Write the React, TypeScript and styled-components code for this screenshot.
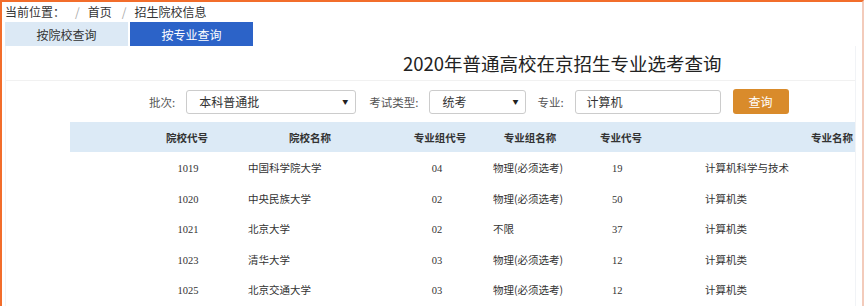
import React from "react";
import styled, { createGlobalStyle } from "styled-components";

const GlobalStyle = createGlobalStyle`
  html, body {
    margin: 0;
    padding: 0;
    background: #fff;
  }
  body {
    font-family: "Noto Sans CJK SC", "Noto Sans", sans-serif;
    color: #333;
  }
`;

const Frame = styled.div`
  box-sizing: border-box;
  width: 864px;
  height: 306px;
  overflow: hidden;
  border-top: 2px solid #f26d2b;
  border-left: 2px solid #f26d2b;
  border-right: 2px solid #f3cbbb;
  padding-left: 3px;
  padding-right: 6px;
`;

const Breadcrumb = styled.div`
  display: flex;
  align-items: center;
  height: 20px;
  font-size: 12px;
  line-height: 20px;
  color: #333;
`;

const Sep = styled.span`
  color: #aaa;
  margin: 0 8px 0 10px;
`;

const Tabs = styled.div`
  display: flex;
  gap: 2px;
  height: 24px;
`;

const Tab = styled.div<{ $active?: boolean }>`
  width: 123px;
  display: flex;
  align-items: center;
  justify-content: center;
  font-size: 12px;
  background: ${({ $active }) => ($active ? "#2c63c8" : "#dce9f5")};
  color: ${({ $active }) => ($active ? "#fff" : "#333")};
`;

const Panel = styled.div`
  border-left: 1px solid #f1f3f6;
  border-right: 1px solid #f1f3f6;
  height: 260px;
`;

const TitleRow = styled.div`
  height: 34px;
  border-bottom: 1px solid #f1f1f1;
  display: flex;
  align-items: center;
  padding-left: 397px;
`;

const Title = styled.h1`
  margin: 0;
  font-size: 18.5px;
  font-weight: normal;
  color: #222;
`;

const FilterRow = styled.div`
  display: flex;
  align-items: center;
  height: 41px;
  padding-left: 143px;
`;

const Label = styled.span<{ $gap?: number }>`
  font-size: 11.5px;
  color: #555;
  margin-left: ${({ $gap }) => $gap ?? 0}px;
  margin-right: 11px;
`;

const SelectBox = styled.div<{ $width: number }>`
  box-sizing: border-box;
  width: ${({ $width }) => $width}px;
  height: 24px;
  border: 1px solid #ccc;
  border-radius: 3px;
  display: flex;
  align-items: center;
  justify-content: space-between;
  padding: 0 7px 0 12px;
  font-size: 12px;
  color: #333;
`;

const Arrow = styled.span`
  font-size: 6px;
  color: #222;
`;

const InputBox = styled.div`
  box-sizing: border-box;
  width: 146px;
  height: 24px;
  border: 1px solid #ccc;
  border-radius: 3px;
  display: flex;
  align-items: center;
  padding-left: 11px;
  font-size: 12px;
  color: #333;
`;

const QueryButton = styled.button`
  margin-left: 12px;
  width: 56px;
  height: 25px;
  border: none;
  border-radius: 3px;
  background: #d98b2b;
  color: #fff;
  font-family: inherit;
  font-size: 12px;
  padding: 0;
`;

const Table = styled.div`
  margin-left: 64px;
`;

const Row = styled.div<{ $cols: string; $head?: boolean }>`
  display: grid;
  grid-template-columns: ${({ $cols }) => $cols};
  align-items: center;
  height: ${({ $head }) => ($head ? "30px" : "30.5px")};
  background: ${({ $head }) => ($head ? "#dceaf6" : "transparent")};
  font-size: 10.5px;
  font-weight: ${({ $head }) => ($head ? "bold" : "normal")};
  color: #333;
`;

const Cell = styled.div<{ $align?: "left" | "center" | "right"; $pad?: number }>`
  text-align: ${({ $align }) => $align ?? "left"};
  padding-left: ${({ $align, $pad }) => ($align === "right" ? 0 : $pad ?? 0)}px;
  padding-right: ${({ $align, $pad }) => ($align === "right" ? $pad ?? 0 : 0)}px;
  padding-top: 1px;
  white-space: nowrap;
`;

const Num = styled.span`
  font-family: "Liberation Serif", "DejaVu Serif", serif;
  font-size: 10.5px;
`;

const headCols = "77px 80px 166px 94px 86px 96px 1fr";
const bodyCols = "78px 80px 172px 74px 126px 80px 1fr";

const rows = [
  { code: "1019", name: "中国科学院大学", group: "04", groupName: "物理(必须选考)", major: "19", majorName: "计算机科学与技术" },
  { code: "1020", name: "中央民族大学", group: "02", groupName: "物理(必须选考)", major: "50", majorName: "计算机类" },
  { code: "1021", name: "北京大学", group: "02", groupName: "不限", major: "37", majorName: "计算机类" },
  { code: "1023", name: "清华大学", group: "03", groupName: "物理(必须选考)", major: "12", majorName: "计算机类" },
  { code: "1025", name: "北京交通大学", group: "03", groupName: "物理(必须选考)", major: "12", majorName: "计算机类" },
];

export default function App() {
  return (
    <>
      <GlobalStyle />
      <Frame>
        <Breadcrumb>
          当前位置：
          <Sep>/</Sep>
          首页
          <Sep>/</Sep>
          招生院校信息
        </Breadcrumb>
        <Tabs>
          <Tab>按院校查询</Tab>
          <Tab $active>按专业查询</Tab>
        </Tabs>
        <Panel>
          <TitleRow>
            <Title>2020年普通高校在京招生专业选考查询</Title>
          </TitleRow>
          <FilterRow>
            <Label>批次:</Label>
            <SelectBox $width={170}>
              本科普通批
              <Arrow>▼</Arrow>
            </SelectBox>
            <Label $gap={13}>考试类型:</Label>
            <SelectBox $width={97}>
              统考
              <Arrow>▼</Arrow>
            </SelectBox>
            <Label $gap={11}>专业:</Label>
            <InputBox>计算机</InputBox>
            <QueryButton>查询</QueryButton>
          </FilterRow>
          <Table>
            <Row $cols={headCols} $head>
              <Cell />
              <Cell $align="center">院校代号</Cell>
              <Cell $align="center">院校名称</Cell>
              <Cell $align="center">专业组代号</Cell>
              <Cell $align="center">专业组名称</Cell>
              <Cell $align="center">专业代号</Cell>
              <Cell $align="right" $pad={2}>专业名称</Cell>
            </Row>
            {rows.map((r) => (
              <Row $cols={bodyCols} key={r.code}>
                <Cell />
                <Cell $align="center"><Num>{r.code}</Num></Cell>
                <Cell $pad={20}>{r.name}</Cell>
                <Cell $align="center"><Num>{r.group}</Num></Cell>
                <Cell $pad={19}>{r.groupName}</Cell>
                <Cell $pad={12}><Num>{r.major}</Num></Cell>
                <Cell $pad={25}>{r.majorName}</Cell>
              </Row>
            ))}
          </Table>
        </Panel>
      </Frame>
    </>
  );
}
